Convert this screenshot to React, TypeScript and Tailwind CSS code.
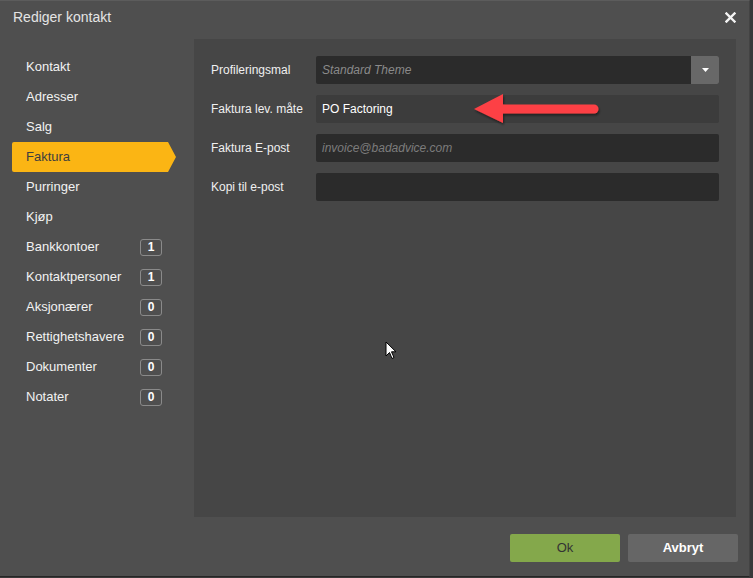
import React from "react";

const navItems: { label: string; badge?: string; active?: boolean }[] = [
  { label: "Kontakt" },
  { label: "Adresser" },
  { label: "Salg" },
  { label: "Faktura", active: true },
  { label: "Purringer" },
  { label: "Kjøp" },
  { label: "Bankkontoer", badge: "1" },
  { label: "Kontaktpersoner", badge: "1" },
  { label: "Aksjonærer", badge: "0" },
  { label: "Rettighetshavere", badge: "0" },
  { label: "Dokumenter", badge: "0" },
  { label: "Notater", badge: "0" },
];

function NavItem({ label, badge, active }: { label: string; badge?: string; active?: boolean }) {
  if (active) {
    return (
      <div className="relative h-[30px] flex items-center">
        <div className="h-[30px] w-[156px] bg-[#fbb514] rounded-l-[2px] flex items-center pl-[14px] text-[#3e3e3e]">
          {label}
        </div>
        <svg width="8" height="30" viewBox="0 0 8 30" className="block">
          <polygon points="0,0 8,15 0,30" fill="#fbb514" />
        </svg>
      </div>
    );
  }
  return (
    <div className="h-[30px] flex items-center pl-[14px] pr-[32px] text-[#f2f2f2]">
      <span className="flex-1">{label}</span>
      {badge && (
        <span className="w-[22px] h-[17px] border border-[#8a8a8a] rounded-[3px] flex items-center justify-center text-[12px] font-bold text-white leading-none">
          {badge}
        </span>
      )}
    </div>
  );
}

function Row({ label, children }: { label: string; children: React.ReactNode }) {
  return (
    <div className="flex items-start">
      <div className="w-[122px] pl-[17px] pt-[6px] text-[12px] text-[#f0f0f0] leading-[16px]">{label}</div>
      {children}
    </div>
  );
}

export default function App() {
  return (
    <div
      className="w-[753px] h-[578px] bg-[#3a3a3a] relative overflow-hidden"
      style={{ fontFamily: '"Liberation Sans", Arial, sans-serif' }}
    >
      <div className="w-[750px] h-[577px] bg-[#4f4f4f] border-r border-b border-[#434343] border-b-[#262626] border-t border-t-[#5c5c5c] flex flex-col">
        {/* Header */}
        <div className="h-[38px] flex items-center justify-between pl-[13px] pr-[13px] pb-[5px]">
          <span className="text-[14px] text-[#e4e4e4]">Rediger kontakt</span>
          <svg width="11" height="11" viewBox="0 0 11 11">
            <path d="M1.5 1.5 L9.5 9.5 M9.5 1.5 L1.5 9.5" stroke="#f4f4f4" strokeWidth="2.4" strokeLinecap="square" />
          </svg>
        </div>
        {/* Body */}
        <div className="flex">
          <div className="w-[194px] pt-[13px] pl-[12px] text-[13px] flex flex-col">
            {navItems.map((it) => (
              <NavItem key={it.label} {...it} />
            ))}
          </div>
          <div className="w-[542px] h-[478px] bg-[#464646] pt-[17px] pr-[17px] flex flex-col gap-[11px]">
            <Row label="Profileringsmal">
              <div className="flex-1 h-[28px] bg-[#2b2b2b] rounded-[2px] flex items-center">
                <span className="flex-1 pl-[6px] text-[12px] italic text-[#8a8a8a]">Standard Theme</span>
                <div className="w-[28px] h-[28px] bg-[#686868] rounded-r-[2px] flex items-center justify-center">
                  <svg width="7" height="4" viewBox="0 0 7 4">
                    <polygon points="0,0 7,0 3.5,4" fill="#ffffff" />
                  </svg>
                </div>
              </div>
            </Row>
            <Row label="Faktura lev. måte">
              <div className="flex-1 h-[28px] bg-[#3c3c3c] rounded-[2px] flex items-center pl-[6px] text-[12px] text-white">
                PO Factoring
              </div>
            </Row>
            <Row label="Faktura E-post">
              <div className="flex-1 h-[28px] bg-[#2b2b2b] rounded-[2px] flex items-center pl-[6px] text-[12px] italic text-[#7c7c7c]">
                invoice@badadvice.com
              </div>
            </Row>
            <Row label="Kopi til e-post">
              <div className="flex-1 h-[28px] bg-[#2b2b2b] rounded-[2px]" />
            </Row>
          </div>
        </div>
        {/* Footer */}
        <div className="flex justify-end gap-[8px] pt-[17px] pr-[11px]">
          <button className="w-[110px] h-[28px] bg-[#84a84b] rounded-[2px] text-[13px] text-[#333333]">Ok</button>
          <button className="w-[110px] h-[28px] bg-[#666666] rounded-[2px] text-[13px] font-bold text-white">Avbryt</button>
        </div>
      </div>

      {/* Red annotation arrow */}
      <svg className="absolute left-[470px] top-[92px]" width="134" height="36" viewBox="0 0 134 36">
        <defs>
          <filter id="sh" x="-10%" y="-30%" width="130%" height="170%">
            <feDropShadow dx="1" dy="2" stdDeviation="1.2" floodColor="#000" floodOpacity="0.45" />
          </filter>
        </defs>
        <g filter="url(#sh)">
          <path d="M32 12.5 L124 12.5 A4.5 4.5 0 0 1 124 21.5 L32 21.5 Z" fill="#fd4145" />
          <polygon points="4,17 33,2 33,31" fill="#fd4145" />
        </g>
      </svg>

      {/* Mouse cursor */}
      <svg className="absolute left-[385px] top-[341px]" width="13" height="20" viewBox="0 0 13 20">
        <path d="M1 1 L1 15 L4.5 11.5 L7 17.5 L9 16.5 L6.5 10.8 L11 10.8 Z" fill="#ffffff" stroke="#000000" strokeWidth="1" strokeLinejoin="miter" />
      </svg>
    </div>
  );
}
